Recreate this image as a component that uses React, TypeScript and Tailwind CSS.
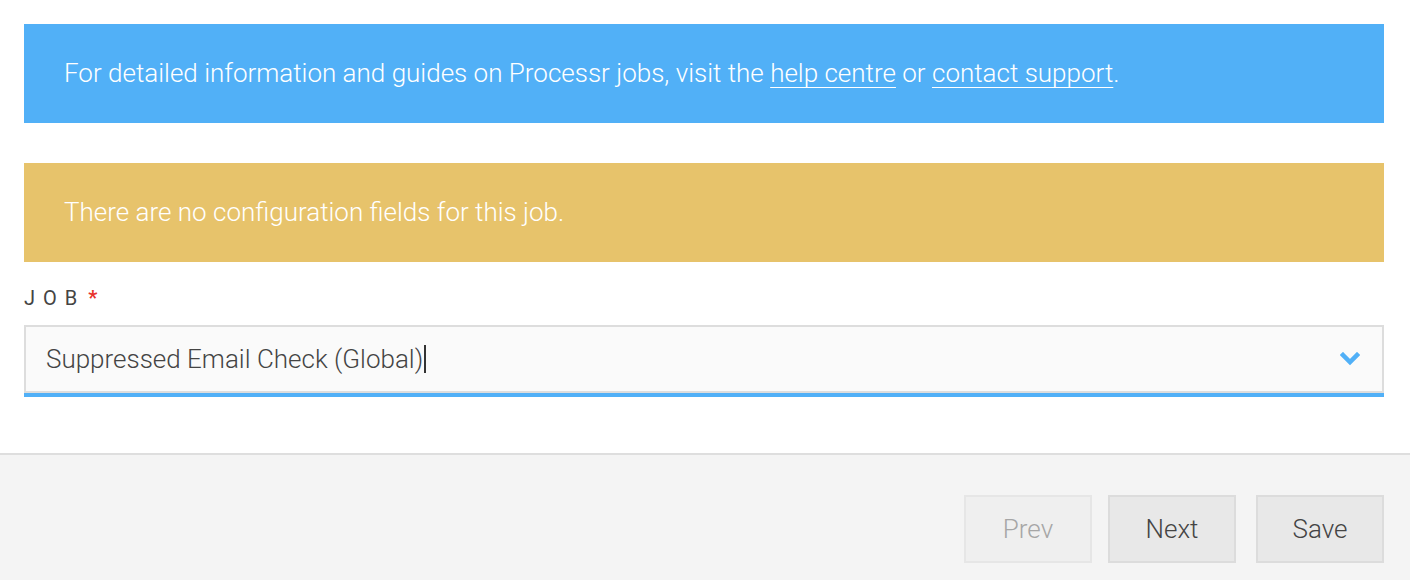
import React from "react";

export default function App() {
  return (
    <div className="w-[1410px] h-[580px] bg-white flex flex-col" style={{ fontFamily: "Roboto, 'Liberation Sans', sans-serif" }}>
      <div className="pl-6 pr-[26px] pt-6 flex flex-col">
        <div className="h-[99px] bg-[#51b0f7] text-white px-10 flex items-center text-[26px] font-light">
          <span>
            For detailed information and guides on Processr jobs, visit the{" "}
            <a className="underline underline-offset-[5px] decoration-1" href="#">help centre</a> or{" "}
            <a className="underline underline-offset-[5px] decoration-1" href="#">contact support</a>.
          </span>
        </div>
        <div className="mt-10 h-[99px] bg-[#e7c36b] text-white px-10 flex items-center text-[26px] font-light">
          There are no configuration fields for this job.
        </div>
        <div className="mt-[26px] flex items-center h-[20px] text-[20px] text-[#444] tracking-[0.4em]">
          JOB <span className="text-[#e8322b] tracking-normal font-bold ml-[3px]">*</span>
        </div>
        <div className="mt-[17px] flex flex-col">
          <div className="h-[68px] border-2 border-[#dddddd] bg-[#fafafa] flex items-center pl-[20px] pr-[22px]">
            <span className="text-[26px] font-light text-[#444]">Suppressed Email Check (Global)</span>
            <span className="w-[1.5px] h-[28px] bg-[#333] ml-[1px]"></span>
            <div className="flex-1" />
            <svg width="20" height="14" viewBox="0 0 20 14">
              <path d="M3 3 L10 10 L17 3" stroke="#51b0f7" strokeWidth="4.5" fill="none" strokeLinecap="square" />
            </svg>
          </div>
          <div className="h-[4px] bg-[#51b0f7]" />
        </div>
      </div>
      <div className="mt-[56px] flex-1 bg-[#f4f4f4] border-t-2 border-[#dedede] flex justify-end items-start pt-[40px] pr-[26px]">
        <button className="w-[128px] h-[68px] bg-[#efefef] border-2 border-[#e6e6e6] text-[#a6a6a6] text-[26px] font-light">Prev</button>
        <button className="ml-[16px] w-[128px] h-[68px] bg-[#e8e8e8] border-2 border-[#dcdcdc] text-[#444] text-[26px] font-light">Next</button>
        <button className="ml-[20px] w-[128px] h-[68px] bg-[#e8e8e8] border-2 border-[#dcdcdc] text-[#444] text-[26px] font-light">Save</button>
      </div>
    </div>
  );
}
